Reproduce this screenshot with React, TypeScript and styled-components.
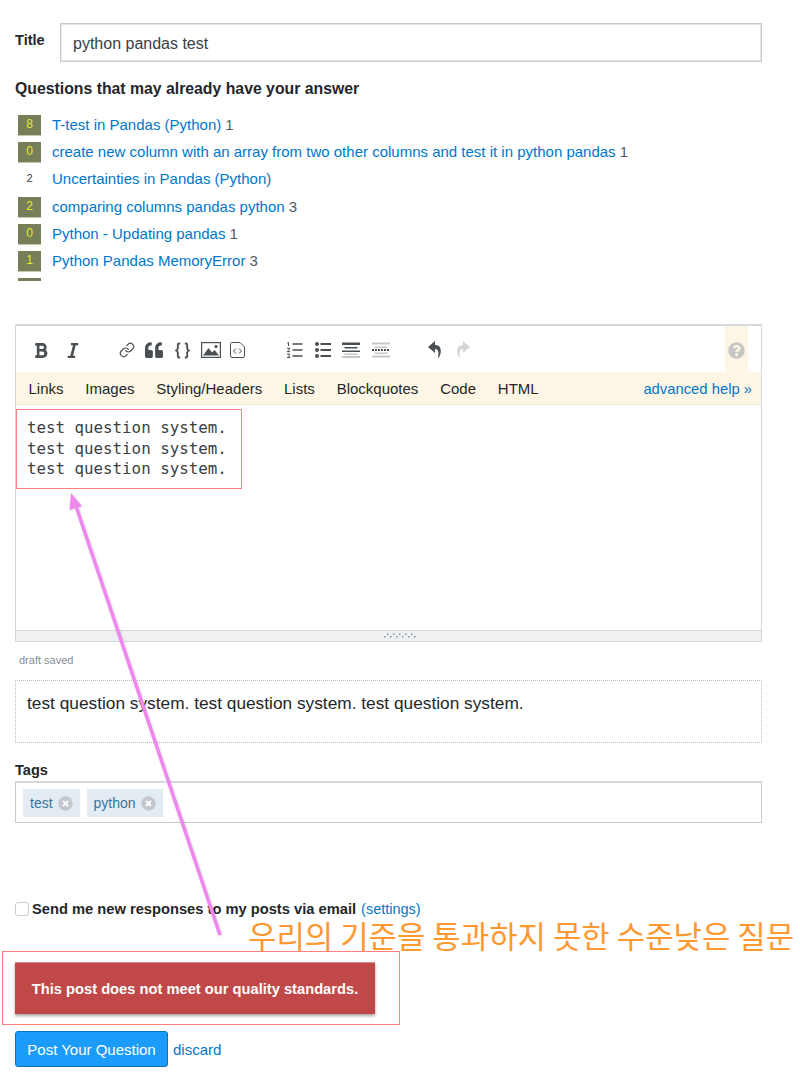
import React from "react";
import styled, { createGlobalStyle } from "styled-components";
import { FaBold, FaItalic, FaQuoteLeft, FaQuestionCircle } from "react-icons/fa";
import { Link as LinkIcon } from "lucide-react";

const Global = createGlobalStyle`
  html, body { margin: 0; padding: 0; background: #fff; }
  body { font-family: "Liberation Sans", Arial, sans-serif; color: #242729; }
  a { text-decoration: none; color: #0077cc; }
`;

const Page = styled.div`
  position: relative;
  width: 800px;
  height: 1076px;
  overflow: hidden;
  box-sizing: border-box;
  padding: 23px 38px 0 15px;
  display: flex;
  flex-direction: column;
`;

const TitleRow = styled.div`
  display: flex;
  align-items: flex-start;
`;
const FieldLabel = styled.label`
  font-size: 14.6px;
  font-weight: 700;
  line-height: 18px;
  color: #242729;
`;
const TitleLabel = styled(FieldLabel)`
  width: 45px;
  padding-top: 8px;
`;
const TitleInput = styled.div`
  flex: 1;
  height: 39px;
  box-sizing: border-box;
  border: 1px solid #c8ccd0;
  box-shadow: inset 0 0 0 1px #e4e6e8;
  padding: 0 12px;
  font-size: 16px;
  line-height: 39px;
  color: #3b4045;
`;
const Heading = styled.h2`
  margin: 17px 0 0;
  font-size: 15.8px;
  line-height: 20px;
  font-weight: 700;
  color: #242729;
`;
const SimilarList = styled.div`
  margin-top: 16px;
  height: 166px;
  overflow: hidden;
  display: flex;
  flex-direction: column;
  gap: 6.2px;
  padding-left: 3px;
`;
const SimilarRow = styled.div`
  display: flex;
  align-items: flex-start;
  height: 21px;
  flex: none;
  font-size: 15px;
  line-height: 19px;
  color: #535a60;
`;
const Votes = styled.span<{ $plain?: boolean }>`
  width: 23px;
  height: 21px;
  flex: none;
  margin-right: 11px;
  text-align: center;
  font-size: ${p => (p.$plain ? "11px" : "12px")};
  line-height: 19px;
  background: ${p => (p.$plain ? "transparent" : "#777f58")};
  border-bottom: ${p => (p.$plain ? "none" : "1px solid #c3c7b1")};
  box-sizing: border-box;
  color: ${p => (p.$plain ? "#3b4045" : "#e8e82a")};
`;
const Count = styled.span`
  margin-left: 4px;
`;

const Editor = styled.div`
  margin-top: 43px;
  border: 1px solid #d6d9dc;
  border-top-width: 2px;
  border-bottom: none;
  display: flex;
  flex-direction: column;
`;
const Toolbar = styled.div`
  position: relative;
  display: flex;
  align-items: center;
  height: 46px;
  padding-left: 18px;
  color: #4a4f54;
`;
const Tool = styled.span<{ $w: number; $gap: number; $muted?: boolean }>`
  width: ${p => p.$w}px;
  margin-left: ${p => p.$gap}px;
  flex: none;
  display: flex;
  align-items: center;
  justify-content: center;
  margin-top: 2px;
  color: ${p => (p.$muted ? "#d4d6d9" : "inherit")};
`;
const HelpTool = styled.span`
  margin-left: auto;
  margin-right: 13px;
  width: 23px;
  height: 46px;
  padding-top: 2px;
  box-sizing: border-box;
  background: #fdf6e5;
  display: flex;
  align-items: center;
  justify-content: center;
  color: #c6c6c6;
`;
const HelpBar = styled.div`
  display: flex;
  align-items: center;
  gap: 21.8px;
  height: 33px;
  box-sizing: border-box;
  padding: 1px 9px 0 12.5px;
  background: #fdf6e5;
  border-bottom: 1px solid #f1e8d5;
  font-size: 15px;
  color: #242729;
`;
const AdvancedHelp = styled.a`
  margin-left: auto;
  font-size: 14.8px;
`;
const Textarea = styled.div`
  height: 225px;
  box-sizing: border-box;
  padding: 13px 11px;
  font-family: "DejaVu Sans Mono", monospace;
  font-size: 15.8px;
  line-height: 20.5px;
  color: #3b4045;
`;
const Grip = styled.div`
  height: 12px;
  box-sizing: border-box;
  margin: 0 -1px;
  padding-left: 23px;
  background: #eff0f1;
  border: 1px solid #d6d9dc;
  display: flex;
  align-items: center;
  justify-content: center;
`;
const Draft = styled.div`
  margin: 11px 0 0 4px;
  font-size: 11px;
  line-height: 14px;
  color: #848d95;
`;
const Preview = styled.div`
  margin-top: 13px;
  height: 63px;
  box-sizing: border-box;
  border: 1px dotted #b4b9bd;
  padding: 12px 11px;
  font-size: 17.3px;
  line-height: 20px;
  color: #242729;
`;
const TagsLabel = styled(FieldLabel)`
  margin-top: 18px;
  display: block;
`;
const TagsInput = styled.div`
  margin-top: 2px;
  height: 42px;
  box-sizing: border-box;
  border: 1px solid #c8ccd0;
  border-top: 2px solid #d6d9dc;
  padding: 6px 7px;
  display: flex;
  gap: 7px;
`;
const Tag = styled.span`
  display: flex;
  align-items: center;
  height: 28px;
  padding: 0 7px 0 7px;
  gap: 5px;
  background: #e4ecf3;
  color: #39739d;
  font-size: 14px;
`;
const TagX = styled.svg`
  width: 15px;
  height: 15px;
  display: block;
`;
const CheckRow = styled.div`
  margin-top: 77px;
  display: flex;
  align-items: center;
  gap: 3px;
  height: 18px;
  font-size: 14.7px;
  font-weight: 700;
  color: #242729;
`;
const Check = styled.span`
  width: 12px;
  height: 12px;
  border: 1px solid #c8ccd0;
  border-radius: 3px;
  background: #fff;
`;
const SettingsLink = styled.a`
  font-weight: 400;
  font-size: 14.5px;
  margin-left: 2px;
`;
const ErrorBox = styled.div`
  margin-top: 44px;
  width: 360px;
  height: 52px;
  box-sizing: border-box;
  background: #c04848;
  border-top: 1px solid #d98d8d;
  box-shadow: 0 2px 3px rgba(0, 0, 0, 0.35);
  color: #fff;
  font-size: 14.7px;
  font-weight: 700;
  display: flex;
  align-items: center;
  justify-content: center;
`;
const Actions = styled.div`
  margin-top: 17px;
  display: flex;
  align-items: center;
  gap: 5px;
  font-size: 15px;
`;
const PostButton = styled.button`
  width: 153px;
  height: 36px;
  padding: 0;
  border: 1px solid #0a72b8;
  border-radius: 3px;
  background: #1c9cfa;
  color: #fff;
  font: 15px "Liberation Sans", Arial, sans-serif;
`;

const Callout = styled.div<{ $x: number; $y: number; $w: number; $h: number }>`
  position: absolute;
  left: ${p => p.$x}px;
  top: ${p => p.$y}px;
  width: ${p => p.$w}px;
  height: ${p => p.$h}px;
  box-sizing: border-box;
  border: 1px solid #ff8080;
`;
const ArrowLayer = styled.svg`
  position: absolute;
  left: 0;
  top: 0;
  pointer-events: none;
  filter: drop-shadow(1px 1px 1px rgba(0, 0, 0, 0.12));
`;
const Annotation = styled.div`
  position: absolute;
  left: 248px;
  top: 919px;
  font-family: "Noto Sans CJK KR", sans-serif;
  font-size: 30.9px;
  line-height: 32px;
  white-space: nowrap;
  color: #ff982e;
`;

const similar: { v: string; t: string; c?: string; plain?: boolean }[] = [
  { v: "8", t: "T-test in Pandas (Python)", c: "1" },
  { v: "0", t: "create new column with an array from two other columns and test it in python pandas", c: "1" },
  { v: "2", t: "Uncertainties in Pandas (Python)", plain: true },
  { v: "2", t: "comparing columns pandas python", c: "3" },
  { v: "0", t: "Python - Updating pandas", c: "1" },
  { v: "1", t: "Python Pandas MemoryError", c: "3" },
  { v: "", t: "" },
];

const Lines = ({ dotted }: { dotted?: boolean }) => (
  <svg width="18" height="16" viewBox="0 0 18 16">
    {dotted ? (
      <>
        <rect x="0" y="0.5" width="18" height="2" fill="#c4c7ca" />
        <rect x="2.5" y="4.5" width="13" height="1.5" fill="#c4c7ca" />
        <path d="M0 8h18" stroke="#4a4f54" strokeWidth="2" strokeDasharray="2 1" />
        <rect x="2.5" y="10.5" width="13" height="1.5" fill="#c4c7ca" />
        <rect x="0" y="13.5" width="18" height="2" fill="#c4c7ca" />
      </>
    ) : (
      <>
        <rect x="0" y="0.5" width="18" height="2.5" fill="#4a4f54" />
        <rect x="2.5" y="5" width="13" height="1.5" fill="#4a4f54" />
        <rect x="0" y="8.5" width="18" height="1.5" fill="#4a4f54" />
        <rect x="2.5" y="11.5" width="13" height="1.5" fill="#c4c7ca" />
        <rect x="0" y="14" width="18" height="2" fill="#c4c7ca" />
      </>
    )}
  </svg>
);

const OrderedList = () => (
  <svg width="16" height="16" viewBox="0 0 16 16" fill="none" stroke="#4a4f54">
    <path d="M5.5 2h10M5.5 8h10M5.5 14h10" strokeWidth="1.5" />
    <path d="M1.5 .5v3.5M.3 1.2 1.5.5" strokeWidth="1" />
    <path d="M0 6.3h3L.2 9.6H3.2" strokeWidth="1" />
    <path d="M0 12h3L1.5 13.7 3 15.5H0" strokeWidth="1" />
  </svg>
);
const BulletList = () => (
  <svg width="16" height="16" viewBox="0 0 16 16" fill="#4a4f54" stroke="none">
    <circle cx="2" cy="2" r="2" />
    <circle cx="2" cy="8" r="2" />
    <circle cx="2" cy="14" r="2" />
    <rect x="5.5" y="1" width="10.5" height="2" />
    <rect x="5.5" y="7" width="10.5" height="2" />
    <rect x="5.5" y="13" width="10.5" height="2" />
  </svg>
);
const ImageIcon = () => (
  <svg width="20" height="16" viewBox="0 0 20 16">
    <rect x="0.6" y="0.6" width="18.8" height="14.8" fill="none" stroke="#4a4f54" strokeWidth="1.2" />
    <path d="M2 13.5 L7.5 6 L11 10.5 L13.5 8 L18 13.5 Z" fill="#4a4f54" />
    <circle cx="15" cy="4.5" r="1.6" fill="#4a4f54" />
  </svg>
);
const FileCode = () => (
  <svg width="15" height="16" viewBox="0 0 15 16" fill="none" stroke="#4a4f54" strokeWidth="1">
    <path d="M1.5 .5H10L14.5 5V14A1.5 1.5 0 0 1 13 15.5H2A1.5 1.5 0 0 1 .5 14V1.5A1 1 0 0 1 1.5 .5Z" />
    <path d="M6 6.5 3.5 9 6 11.5M9 6.5 11.5 9 9 11.5" />
  </svg>
);
const Braces = () => (
  <svg width="15" height="17" viewBox="0 0 16 17" fill="none" stroke="#4a4f54" strokeWidth="2">
    <path d="M5.5 1H4.5C3.5 1 3 1.6 3 2.5V6.2C3 7.4 2.4 8 1.2 8.5 2.4 9 3 9.6 3 10.8V14.5C3 15.4 3.5 16 4.5 16H5.5" />
    <path d="M10.5 1H11.5C12.5 1 13 1.6 13 2.5V6.2C13 7.4 13.6 8 14.8 8.5 13.6 9 13 9.6 13 10.8V14.5C13 15.4 12.5 16 11.5 16H10.5" />
  </svg>
);
const Undo = ({ flip }: { flip?: boolean }) => (
  <svg width="14" height="18" viewBox="0 0 14 18" style={flip ? { transform: "scaleX(-1)" } : undefined}>
    <path d="M7 0 L0 6 L7 12 V8 C10 8 10.8 10.5 10.3 14 L10 17.5 C13.5 14.5 15 3.5 7 4 Z" fill="currentColor" />
  </svg>
);

export default function App() {
  return (
    <Page>
      <Global />
      <TitleRow>
        <TitleLabel>Title</TitleLabel>
        <TitleInput>python pandas test</TitleInput>
      </TitleRow>
      <Heading>Questions that may already have your answer</Heading>
      <SimilarList>
        {similar.map((s, i) => (
          <SimilarRow key={i}>
            <Votes $plain={s.plain}>{s.v}</Votes>
            <a href="#">{s.t}</a>
            {s.c && <Count>{s.c}</Count>}
          </SimilarRow>
        ))}
      </SimilarList>
      <Editor>
        <Toolbar>
          <Tool $w={14} $gap={0}><FaBold size={17} /></Tool>
          <Tool $w={14} $gap={18}><FaItalic size={17} /></Tool>
          <Tool $w={16} $gap={39}><LinkIcon size={18} strokeWidth={1.8} /></Tool>
          <Tool $w={18} $gap={10}><FaQuoteLeft size={18} /></Tool>
          <Tool $w={16} $gap={11}><Braces /></Tool>
          <Tool $w={20} $gap={11}><ImageIcon /></Tool>
          <Tool $w={15} $gap={9}><FileCode /></Tool>
          <Tool $w={16} $gap={42}><OrderedList /></Tool>
          <Tool $w={16} $gap={12}><BulletList /></Tool>
          <Tool $w={18} $gap={11}><Lines /></Tool>
          <Tool $w={18} $gap={12}><Lines dotted /></Tool>
          <Tool $w={14} $gap={38}><Undo /></Tool>
          <Tool $w={14} $gap={14} $muted><Undo flip /></Tool>
          <HelpTool><FaQuestionCircle size={17} /></HelpTool>
        </Toolbar>
        <HelpBar>
          <span>Links</span>
          <span>Images</span>
          <span>Styling/Headers</span>
          <span>Lists</span>
          <span>Blockquotes</span>
          <span>Code</span>
          <span>HTML</span>
          <AdvancedHelp href="#">advanced help »</AdvancedHelp>
        </HelpBar>
        <Textarea>
          test question system.<br />
          test question system.<br />
          test question system.
        </Textarea>
        <Grip>
          <svg width="32" height="6" viewBox="0 0 32 6" fill="#8a8f94">
            {[1, 7, 13, 19, 25, 31].map(x => <rect key={x} x={x - 1} y="3" width="1.5" height="1.5" />)}
            {[4, 10, 16, 22, 28].map(x => <rect key={x} x={x - 1} y="0.5" width="1.5" height="1.5" />)}
          </svg>
        </Grip>
      </Editor>
      <Draft>draft saved</Draft>
      <Preview>test question system. test question system. test question system.</Preview>
      <TagsLabel>Tags</TagsLabel>
      <TagsInput>
        {["test", "python"].map(t => (
          <Tag key={t}>
            {t}
            <TagX viewBox="0 0 15 15">
              <circle cx="7.5" cy="7.5" r="7.2" fill="#c4c8cc" />
              <path d="M5 5l5 5M10 5l-5 5" stroke="#fff" strokeWidth="1.8" />
            </TagX>
          </Tag>
        ))}
      </TagsInput>
      <CheckRow>
        <Check />
        <span>Send me new responses to my posts via email</span>
        <SettingsLink href="#">(settings)</SettingsLink>
      </CheckRow>
      <ErrorBox>This post does not meet our quality standards.</ErrorBox>
      <Actions>
        <PostButton>Post Your Question</PostButton>
        <a href="#">discard</a>
      </Actions>

      <Callout $x={16} $y={409} $w={226} $h={80} />
      <Callout $x={2} $y={951} $w={398} $h={74} />
      <ArrowLayer width="800" height="1076" viewBox="0 0 800 1076">
        <path d="M220 935 L76 506" stroke="#ee88ee" strokeWidth="3.6" />
        <path d="M71 493 L69.5 510 L82 506 Z" fill="#ee88ee" />
      </ArrowLayer>
      <Annotation>우리의 기준을 통과하지 못한 수준낮은 질문</Annotation>
    </Page>
  );
}
